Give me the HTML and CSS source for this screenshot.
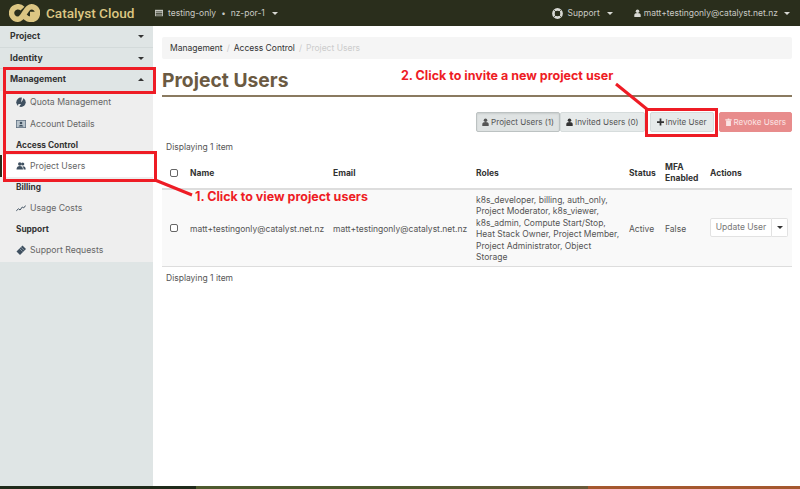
FILE: index.html
```html
<!DOCTYPE html>
<html lang="en">
<head>
<meta charset="utf-8">
<title>Project Users</title>
<link rel="stylesheet" href="styles.css">
</head>
<body>
<header class="topbar">
  <div class="brand">
    <svg class="logo" viewBox="0 0 31 18"><path d="M13.500 4.700A6.300 6.300 0 1 0 9 15.300C15 15.300 16 2.700 22.500 2.700A6.100 6.100 0 0 1 28.300 10.500H21M15 11.500C17 14.500 20 15.500 22.500 15.500C25 15.500 27.500 14 28.300 10.500" fill="none" stroke="#dcc683" stroke-width="5.400"/></svg>
    <span class="brand-name">Catalyst Cloud</span>
  </div>
  <div class="scope">
    <svg class="top-icon" viewBox="0 0 10 8"><path d="M0 0h10v8H0z" fill="#c9cac4"/><path d="M1 2h8v1H1zM1 4h8v1H1zM1 6h8v1H1z" fill="#2a2e1c"/></svg>
    <span>testing-only</span><span class="dot">•</span><span>nz-por-1</span><span class="caret"></span>
  </div>
  <div class="top-right">
    <div class="top-item">
      <svg class="top-icon support-icon" viewBox="0 0 10 10"><circle cx="5" cy="5" r="3.700" fill="none" stroke="#d8d9d4" stroke-width="2.400"/><path d="M2 2l2 2M8 2L6 4M2 8l2-2M8 8L6 6" stroke="#2a2e1c" stroke-width="0.800"/></svg>
      <span>Support</span><span class="caret caret-far"></span>
    </div>
    <div class="top-item">
      <svg class="top-icon user-icon" viewBox="0 0 8 10"><circle cx="4" cy="2.700" r="2.200" fill="#d8d9d4"/><path d="M0 10V7.500C0 6 1.500 5 4 5s4 1 4 2.500V10z" fill="#d8d9d4"/></svg>
      <span>matt+testingonly@catalyst.net.nz</span><span class="caret"></span>
    </div>
  </div>
</header>

<div class="layout">
  <nav class="sidebar">
    <div class="nav-head"><span>Project</span><span class="caret caret-dark"></span></div>
    <div class="nav-head"><span>Identity</span><span class="caret caret-dark"></span></div>
    <div class="nav-head nav-open"><span>Management</span><span class="caret caret-dark caret-up"></span></div>
    <div class="submenu">
      <a class="nav-link"><svg class="nav-icon" viewBox="0 0 10 10"><circle cx="5" cy="5.300" r="4.700" fill="#3f5060"/><path d="M5 5.500L6 0h2L6.500 3.500zM5 7l-2 3H1.500L2.500 7z" fill="#eee"/></svg>Quota Management</a>
      <a class="nav-link"><svg class="nav-icon" viewBox="0 0 10 8"><path d="M0 0h10v8H0z" fill="#5b6c7c"/><path d="M.7.700h8.600v6.600H.7z" fill="#b9c4cc"/><circle cx="5" cy="3" r="1.300" fill="#3f5060"/><path d="M2.700 6.500c0-2 4.600-2 4.600 0z" fill="#3f5060"/></svg>Account Details</a>
      <div class="nav-group">Access Control</div>
      <a class="nav-link nav-active"><svg class="nav-icon" viewBox="0 0 10 8"><circle cx="3.800" cy="2" r="1.800" fill="#3f5060"/><circle cx="6.700" cy="2" r="1.600" fill="#3f5060"/><path d="M.5 7.500C.5 5 2 4 3.800 4S7 5 7 7.500zM7.600 7.500C7.600 6 7.200 5 6.500 4.200 8.500 4 9.700 5 9.700 7.500z" fill="#3f5060"/></svg>Project Users</a>
      <div class="nav-group">Billing</div>
      <a class="nav-link"><svg class="nav-icon" viewBox="0 0 10 8"><path d="M.3 6.800l2.200-2 1.500 1.200 2.300-3 1.400.9L9.700 1.500" fill="none" stroke="#3f5060" stroke-width="1"/></svg>Usage Costs</a>
      <div class="nav-group">Support</div>
      <a class="nav-link"><svg class="nav-icon" viewBox="0 0 10 10"><path d="M6.500.5L10 4 4 10 .5 6.500z" fill="#3f5060"/><path d="M3.500 3.500l3 3M5 2.200l3 3" stroke="#b9c4cc" stroke-width="0.600"/></svg>Support Requests</a>
    </div>
  </nav>

  <main class="content">
    <ol class="breadcrumb">
      <li>Management</li><li class="sep">/</li><li>Access Control</li><li class="sep">/</li><li class="crumb-current">Project Users</li>
    </ol>
    <h1 class="page-title">Project Users</h1>
    <div class="toolbar">
      <div class="btn-group">
        <button class="btn btn-pressed"><svg class="btn-icon" viewBox="0 0 8 10"><circle cx="4" cy="2.700" r="2.200" fill="#555"/><path d="M0 10V7.500C0 6 1.500 5 4 5s4 1 4 2.500V10z" fill="#555"/></svg>Project Users (1)</button>
        <button class="btn"><svg class="btn-icon" viewBox="0 0 8 10"><circle cx="4" cy="2.700" r="2.200" fill="#333"/><path d="M0 10V7.500C0 6 1.500 5 4 5s4 1 4 2.500V10z" fill="#333"/></svg>Invited Users (0)</button>
      </div>
      <button class="btn btn-invite"><svg class="btn-icon" viewBox="0 0 8 8"><path d="M3 0h2v3h3v2H5v3H3V5H0V3h3z" fill="#333"/></svg>Invite User</button>
      <button class="btn btn-danger"><svg class="btn-icon" viewBox="0 0 8 10"><path d="M0 1.500h8V3H0zM3 .5h2v1H3zM1 3.500h6V10H1z" fill="#fbe4e4"/></svg>Revoke Users</button>
    </div>
    <div class="count">Displaying 1 item</div>
    <table class="users">
      <thead>
        <tr>
          <th class="col-check"><span class="checkbox"></span></th>
          <th class="col-name">Name</th>
          <th class="col-email">Email</th>
          <th class="col-roles">Roles</th>
          <th class="col-status">Status</th>
          <th class="col-mfa">MFA Enabled</th>
          <th class="col-actions">Actions</th>
        </tr>
      </thead>
      <tbody>
        <tr>
          <td><span class="checkbox"></span></td>
          <td>matt+testingonly@catalyst.net.nz</td>
          <td>matt+testingonly@catalyst.net.nz</td>
          <td>k8s_developer, billing, auth_only,<br>Project Moderator, k8s_viewer,<br>k8s_admin, Compute Start/Stop,<br>Heat Stack Owner, Project Member,<br>Project Administrator, Object<br>Storage</td>
          <td>Active</td>
          <td>False</td>
          <td class="cell-actions">
            <div class="split">
              <button class="split-main">Update User</button><button class="split-toggle"><span class="caret caret-dark"></span></button>
            </div>
          </td>
        </tr>
      </tbody>
    </table>
    <div class="count count-bottom">Displaying 1 item</div>
  </main>
</div>

<div class="stripe"><span class="s1"></span><span class="s2"></span><span class="s3"></span></div>

<div class="annot box-mgmt"></div>
<div class="annot box-users"></div>
<div class="annot box-invite"></div>
<div class="annot box-left"></div>
<svg class="arrows" viewBox="0 0 800 489">
  <path d="M155 180L192 195M616 84L648 110" stroke="#ee1c25" stroke-width="3" fill="none"/>
</svg>
<div class="note note-1">1. Click to view project users</div>
<div class="note note-2">2. Click to invite a new project user</div>
</body>
</html>
```
FILE: styles.css
```css
* { box-sizing: border-box; }
html, body { margin: 0; height: 100%; }
body {
  position: relative;
  display: flex;
  flex-direction: column;
  height: 489px;
  overflow: hidden;
  background: #fff;
  color: #555;
  font-family: Inter, "Liberation Sans", sans-serif;
  font-size: 8.500px;
}
.topbar {
  flex: none;
  display: flex;
  align-items: center;
  height: 26px;
  background: #2a2e1c;
  color: #c9cac4;
}
.brand { display: flex; align-items: center; width: 155px; padding-left: 9px; gap: 6px; }
.logo { width: 31px; height: 18px; flex: none; }
.brand-name { color: #dcc683; font-family: Roboto, sans-serif; font-size: 13.600px; font-weight: 500; white-space: nowrap; }
.scope { display: flex; align-items: center; gap: 4px; }
.top-icon { width: 8px; height: 8px; margin-right: 1px; }
.dot { font-size: 8px; margin: 0 1px; }
.caret {
  display: inline-block;
  width: 0;
  height: 0;
  margin-left: 3px;
  border-left: 3px solid transparent;
  border-right: 3px solid transparent;
  border-top: 3px solid #d8d9d4;
}
.caret-far { margin-left: 4px; }
.caret-dark { border-top-color: #333; margin: 0; }
.caret-up { border-top: 0; border-bottom: 3px solid #333; }
.top-right { margin-left: auto; display: flex; align-items: center; gap: 21px; padding-right: 10px; }
.top-item { display: flex; align-items: center; gap: 3px; }
.support-icon { width: 11px; height: 11px; margin-right: 2px; }
.user-icon { margin-right: 0; width: 7px; }

.layout { flex: 1; display: flex; min-height: 0; }
.sidebar { flex: none; width: 153px; background: #dfe5e5; color: #333; font-size: 8.700px; }
.nav-head {
  display: flex;
  align-items: center;
  justify-content: space-between;
  height: 21px;
  padding: 0 9px 0 10px;
  font-weight: 700;
  border-bottom: 1px solid #d3dada;
}
.nav-head:first-child { height: 22px; padding-bottom: 1px; }
.nav-open { height: 22px; padding-bottom: 2px; border-bottom: 0; }
.submenu { background: #eee; height: 171px; }
.nav-link {
  display: flex;
  align-items: center;
  height: 22px;
  padding-left: 16px;
  color: #666;
}
.nav-active { background: #fff; border-left: 2px solid #2a2e1c; padding-left: 14px; }
.nav-icon { width: 10px; height: 10px; margin-right: 4px; flex: none; }
.nav-group {
  display: flex;
  align-items: center;
  height: 20px;
  padding-left: 16px;
  font-size: 8.300px;
  font-weight: 700;
  color: #333;
}
.content { flex: 1; min-width: 0; padding: 11px 8px 0 9px; }
.breadcrumb {
  display: flex;
  align-items: center;
  gap: 4px;
  height: 22px;
  margin: 0;
  padding: 0 8px;
  list-style: none;
  background: #f5f5f5;
  border-radius: 2px;
  color: #333;
}
.sep, .crumb-current { color: #ccc; }
.page-title {
  margin: 8px 0 0;
  height: 30px;
  border-bottom: 2px solid #8a7a60;
  color: #6b5a42;
  font-size: 19.300px;
  line-height: 26px;
  font-weight: 700;
}
.toolbar { display: flex; justify-content: flex-end; align-items: center; gap: 5px; margin-top: 15px; }
.btn-group { display: flex; }
.btn {
  display: flex;
  align-items: center;
  height: 20px;
  padding: 0 6px;
  background: #e6eaea;
  border: 1px solid #d6dcdc;
  border-radius: 2px;
  color: #555;
  font: inherit;
  font-size: 8.100px;
  white-space: nowrap;
}
.btn-group .btn { padding: 0 5px; }
.btn-pressed { background: #dfe3e3; border-color: #bcc2c2; box-shadow: inset 0 1px 2px rgba(0,0,0,.1); }
.btn-danger { background: #e88c8c; border-color: #e88c8c; color: #fbe4e4; padding: 0 5px; }
.btn-icon { width: 7px; height: 8px; margin-right: 2px; }
.count { margin: 9px 4px 0; height: 12px; line-height: 12px; }
.count-bottom { margin-top: 5px; }
.users { width: 630px; margin-top: 5px; border-collapse: collapse; table-layout: fixed; }
.users th {
  height: 31px;
  padding: 0 0 0 7px;
  text-align: left;
  font-weight: 700;
  color: #333;
  line-height: 11px;
  border-bottom: 2px solid #ddd;
}
.users td {
  height: 77px;
  padding: 5px 0 3px 7px;
  line-height: 11.400px;
  background: #f9f9f9;
  border-bottom: 1px solid #ddd;
}
.users td.cell-actions { padding: 3px 0 5px 7px; }
.users tbody td:first-child, .users .col-check { padding: 0 0 0 8px; }
.col-check { width: 21px; }
.col-name { width: 143px; }
.col-email { width: 143px; }
.col-roles { width: 153px; }
.col-status { width: 36px; }
.col-mfa { width: 45px; }
.col-actions { width: 89px; }
.checkbox {
  display: block;
  width: 8px;
  height: 8px;
  background: #fff;
  border: 1px solid #666;
  border-radius: 2px;
}
.split { display: flex; height: 19px; }
.split-main, .split-toggle {
  height: 19px;
  background: #fff;
  border: 1px solid #e2e2e2;
  color: #777;
  font: inherit;
  padding: 0;
}
.split-main { width: 62px; border-radius: 2px 0 0 2px; }
.split-toggle { width: 16px; border-left: 0; border-radius: 0 2px 2px 0; display: flex; align-items: center; justify-content: center; }
.stripe { position: absolute; left: 0; right: 0; bottom: 0; height: 3px; display: flex; }
.stripe span { display: block; height: 3px; }
.s1 { width: 196px; background: #1f2a1a; }
.s2 { width: 392px; background: linear-gradient(90deg, #4e5a2e 50%, #6a5a3a); }
.s3 { flex: 1; background: #a5582f; }

.annot { position: absolute; border: 3px solid #ee1c25; }
.box-mgmt { left: 3px; top: 67px; width: 153px; height: 27px; }
.box-users { left: 3px; top: 151px; width: 154px; height: 31px; }
.box-invite { left: 645px; top: 108px; width: 73px; height: 29px; }
.box-left { left: 3px; top: 92px; width: 3px; height: 60px; border-width: 0 0 0 3px; }
.arrows { position: absolute; left: 0; top: 0; width: 800px; height: 489px; pointer-events: none; }
.note {
  position: absolute;
  color: #ee1c25;
  font-size: 12.500px;
  font-weight: 700;
  white-space: nowrap;
  line-height: 14px;
}
.note-1 { left: 195px; top: 190px; }
.note-2 { left: 401px; top: 69px; }
```
